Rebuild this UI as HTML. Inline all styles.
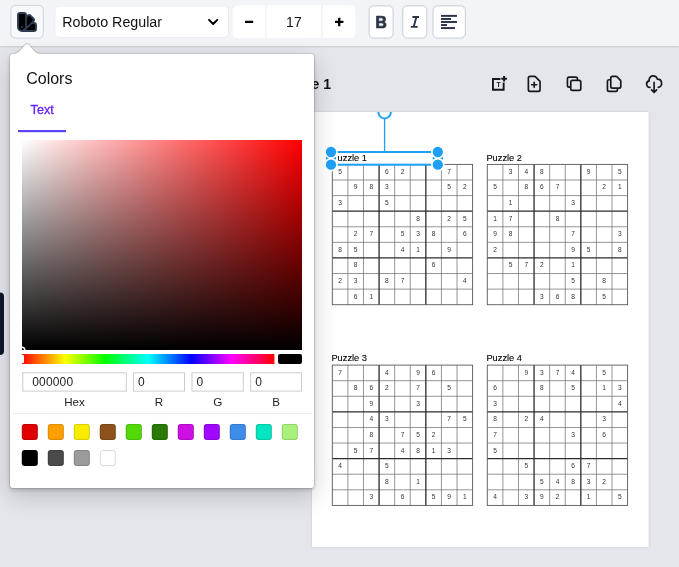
<!DOCTYPE html>
<html lang="en">
<head>
<meta charset="utf-8">
<title>Sudoku editor</title>
<style>
html,body{margin:0;padding:0}
body{width:679px;height:567px;overflow:hidden;position:relative;background:#e5e6eb;font-family:"Liberation Sans",sans-serif;color:#000}
#root{position:absolute;left:0;top:0;width:679px;height:567px;overflow:hidden;will-change:transform}
#root>svg,#root>div{position:absolute}
svg.full{left:0;top:0;width:679px;height:567px}
text{font-family:"Liberation Sans",sans-serif;white-space:pre}
.tb{left:0;top:0;width:679px;height:46px;background:#f3f4f8;box-shadow:0 1px 2px rgba(16,22,26,.14)}
.pop{left:10px;top:54px;width:304px;height:434px;background:#fff;border-radius:3px;box-shadow:0 0 0 1px rgba(16,22,26,.1),0 2px 4px rgba(16,22,26,.2),0 8px 24px rgba(16,22,26,.2)}
.pt{font-size:9.8px;fill:#000;stroke:#000;stroke-width:.1px}
.dg text{font-size:6.6px;fill:#333;text-anchor:middle}
.t14{font-size:14px;fill:#111}
.lab{font-size:11.6px;fill:#222;text-anchor:middle}
.inp{font-size:12px;fill:#222;letter-spacing:.15px}
</style>
</head>
<body>
<div id="root">

<!-- ================= canvas area ================= -->
<svg class="full" viewBox="0 0 679 567">
  <defs>
    <clipPath id="pageclip"><rect x="312" y="112" width="336.5" height="435"/></clipPath>
    <filter id="pgsh" x="-5%" y="-5%" width="110%" height="110%"><feDropShadow dx="0" dy="0" stdDeviation="1.2" flood-color="#000" flood-opacity=".14"/></filter>
  </defs>
  <rect x="312" y="112" width="336.5" height="435" fill="#fff" filter="url(#pgsh)"/>
  <text class="t14" x="285.8" y="89.2" font-weight="bold">Page 1</text>
  <!-- add text -->
  <g fill="none" stroke="#14171f" stroke-width="1.9">
    <path d="M500.4 78.95H492.95V89.75H503.65V82.5"/>
    <path d="M501.3 78.7H506.9M504.1 75.9V81.5" stroke-width="2"/>
    <text x="498.55" y="87.05" font-size="6.9" font-weight="bold" fill="#14171f" stroke="none" text-anchor="middle">T</text>
  </g>
  <g fill="none" stroke="#14171f" stroke-width="2" stroke-linecap="round" stroke-linejoin="round">
    <path transform="translate(524.2 73.9) scale(.8333)" d="M9 13h6m-3-3v6m5 5H7a2 2 0 01-2-2V5a2 2 0 012-2h5.586a1 1 0 01.707.293l5.414 5.414a1 1 0 01.293.707V19a2 2 0 01-2 2z"/>
    <path transform="translate(564.1 73.75) scale(.8333)" d="M8 16H6a2 2 0 01-2-2V6a2 2 0 012-2h8a2 2 0 012 2v2m-6 12h8a2 2 0 002-2v-8a2 2 0 00-2-2h-8a2 2 0 00-2 2v8a2 2 0 002 2z"/>
    <path transform="translate(604.1 73.9) scale(.8333)" d="M8 7v8a2 2 0 002 2h6M8 7V5a2 2 0 012-2h4.586a1 1 0 01.707.293l4.414 4.414a1 1 0 01.293.707V15a2 2 0 01-2 2h-2M8 7H6a2 2 0 00-2 2v10a2 2 0 002 2h8a2 2 0 002-2v-2"/>
    <path transform="translate(644.1 74.1) scale(.8333)" d="M7 16a4 4 0 01-.88-7.903A5 5 0 1115.9 6L16 6a5 5 0 011 9.9M9 19l3 3m0 0l3-3m-3 3V10"/>
  </g>
  <g clip-path="url(#pageclip)">
<text class="pt" x="331.4" y="161.45" textLength="35.6" lengthAdjust="spacingAndGlyphs">Puzzle 1</text>
<g transform="translate(332.30 164.40)">
<path d="M15.59 0V140.31M0 15.59H140.31M31.18 0V140.31M0 31.18H140.31M62.36 0V140.31M0 62.36H140.31M77.95 0V140.31M0 77.95H140.31M109.13 0V140.31M0 109.13H140.31M124.72 0V140.31M0 124.72H140.31" stroke="#686868" stroke-width="0.7" fill="none"/>
<path d="M46.77 0V140.31M0 46.77H140.31M93.54 0V140.31M0 93.54H140.31" stroke="#2c2c2c" stroke-width="1.3" fill="none"/>
<rect x="0" y="0" width="140.31" height="140.31" stroke="#585858" stroke-width="0.9" fill="none"/>
<g class="dg">
<text x="7.8" y="9.5">5</text>
<text x="54.6" y="9.5">6</text>
<text x="70.2" y="9.5">2</text>
<text x="116.9" y="9.5">7</text>
<text x="23.4" y="25.1">9</text>
<text x="39.0" y="25.1">8</text>
<text x="54.6" y="25.1">3</text>
<text x="116.9" y="25.1">5</text>
<text x="132.5" y="25.1">2</text>
<text x="7.8" y="40.7">3</text>
<text x="54.6" y="40.7">5</text>
<text x="85.7" y="56.3">8</text>
<text x="116.9" y="56.3">2</text>
<text x="132.5" y="56.3">5</text>
<text x="23.4" y="71.9">2</text>
<text x="39.0" y="71.9">7</text>
<text x="70.2" y="71.9">5</text>
<text x="85.7" y="71.9">3</text>
<text x="101.3" y="71.9">8</text>
<text x="132.5" y="71.9">6</text>
<text x="7.8" y="87.5">8</text>
<text x="23.4" y="87.5">5</text>
<text x="70.2" y="87.5">4</text>
<text x="85.7" y="87.5">1</text>
<text x="116.9" y="87.5">9</text>
<text x="23.4" y="103.1">8</text>
<text x="101.3" y="103.1">6</text>
<text x="7.8" y="118.7">2</text>
<text x="23.4" y="118.7">3</text>
<text x="54.6" y="118.7">8</text>
<text x="70.2" y="118.7">7</text>
<text x="132.5" y="118.7">4</text>
<text x="23.4" y="134.3">6</text>
<text x="39.0" y="134.3">1</text>
</g></g>
<text class="pt" x="486.4" y="161.45" textLength="35.6" lengthAdjust="spacingAndGlyphs">Puzzle 2</text>
<g transform="translate(487.30 164.40)">
<path d="M15.59 0V140.31M0 15.59H140.31M31.18 0V140.31M0 31.18H140.31M62.36 0V140.31M0 62.36H140.31M77.95 0V140.31M0 77.95H140.31M109.13 0V140.31M0 109.13H140.31M124.72 0V140.31M0 124.72H140.31" stroke="#686868" stroke-width="0.7" fill="none"/>
<path d="M46.77 0V140.31M0 46.77H140.31M93.54 0V140.31M0 93.54H140.31" stroke="#2c2c2c" stroke-width="1.3" fill="none"/>
<rect x="0" y="0" width="140.31" height="140.31" stroke="#585858" stroke-width="0.9" fill="none"/>
<g class="dg">
<text x="23.4" y="9.5">3</text>
<text x="39.0" y="9.5">4</text>
<text x="54.6" y="9.5">8</text>
<text x="101.3" y="9.5">9</text>
<text x="132.5" y="9.5">5</text>
<text x="7.8" y="25.1">5</text>
<text x="39.0" y="25.1">8</text>
<text x="54.6" y="25.1">6</text>
<text x="70.2" y="25.1">7</text>
<text x="116.9" y="25.1">2</text>
<text x="132.5" y="25.1">1</text>
<text x="23.4" y="40.7">1</text>
<text x="85.7" y="40.7">3</text>
<text x="7.8" y="56.3">1</text>
<text x="23.4" y="56.3">7</text>
<text x="70.2" y="56.3">8</text>
<text x="7.8" y="71.9">9</text>
<text x="23.4" y="71.9">8</text>
<text x="85.7" y="71.9">7</text>
<text x="132.5" y="71.9">3</text>
<text x="7.8" y="87.5">2</text>
<text x="85.7" y="87.5">9</text>
<text x="101.3" y="87.5">5</text>
<text x="132.5" y="87.5">8</text>
<text x="23.4" y="103.1">5</text>
<text x="39.0" y="103.1">7</text>
<text x="54.6" y="103.1">2</text>
<text x="85.7" y="103.1">1</text>
<text x="85.7" y="118.7">5</text>
<text x="116.9" y="118.7">8</text>
<text x="54.6" y="134.3">3</text>
<text x="70.2" y="134.3">6</text>
<text x="85.7" y="134.3">8</text>
<text x="116.9" y="134.3">5</text>
</g></g>
<text class="pt" x="331.4" y="361.45" textLength="35.6" lengthAdjust="spacingAndGlyphs">Puzzle 3</text>
<g transform="translate(332.30 365.10)">
<path d="M15.59 0V140.31M0 15.59H140.31M31.18 0V140.31M0 31.18H140.31M62.36 0V140.31M0 62.36H140.31M77.95 0V140.31M0 77.95H140.31M109.13 0V140.31M0 109.13H140.31M124.72 0V140.31M0 124.72H140.31" stroke="#686868" stroke-width="0.7" fill="none"/>
<path d="M46.77 0V140.31M0 46.77H140.31M93.54 0V140.31M0 93.54H140.31" stroke="#2c2c2c" stroke-width="1.3" fill="none"/>
<rect x="0" y="0" width="140.31" height="140.31" stroke="#585858" stroke-width="0.9" fill="none"/>
<g class="dg">
<text x="7.8" y="9.5">7</text>
<text x="54.6" y="9.5">4</text>
<text x="85.7" y="9.5">9</text>
<text x="101.3" y="9.5">6</text>
<text x="23.4" y="25.1">8</text>
<text x="39.0" y="25.1">6</text>
<text x="54.6" y="25.1">2</text>
<text x="85.7" y="25.1">7</text>
<text x="116.9" y="25.1">5</text>
<text x="39.0" y="40.7">9</text>
<text x="85.7" y="40.7">3</text>
<text x="39.0" y="56.3">4</text>
<text x="54.6" y="56.3">3</text>
<text x="116.9" y="56.3">7</text>
<text x="132.5" y="56.3">5</text>
<text x="39.0" y="71.9">8</text>
<text x="70.2" y="71.9">7</text>
<text x="85.7" y="71.9">5</text>
<text x="101.3" y="71.9">2</text>
<text x="23.4" y="87.5">5</text>
<text x="39.0" y="87.5">7</text>
<text x="70.2" y="87.5">4</text>
<text x="85.7" y="87.5">8</text>
<text x="101.3" y="87.5">1</text>
<text x="116.9" y="87.5">3</text>
<text x="7.8" y="103.1">4</text>
<text x="54.6" y="103.1">5</text>
<text x="54.6" y="118.7">8</text>
<text x="85.7" y="118.7">1</text>
<text x="39.0" y="134.3">3</text>
<text x="70.2" y="134.3">6</text>
<text x="101.3" y="134.3">5</text>
<text x="116.9" y="134.3">9</text>
<text x="132.5" y="134.3">1</text>
</g></g>
<text class="pt" x="486.4" y="361.45" textLength="35.6" lengthAdjust="spacingAndGlyphs">Puzzle 4</text>
<g transform="translate(487.30 365.10)">
<path d="M15.59 0V140.31M0 15.59H140.31M31.18 0V140.31M0 31.18H140.31M62.36 0V140.31M0 62.36H140.31M77.95 0V140.31M0 77.95H140.31M109.13 0V140.31M0 109.13H140.31M124.72 0V140.31M0 124.72H140.31" stroke="#686868" stroke-width="0.7" fill="none"/>
<path d="M46.77 0V140.31M0 46.77H140.31M93.54 0V140.31M0 93.54H140.31" stroke="#2c2c2c" stroke-width="1.3" fill="none"/>
<rect x="0" y="0" width="140.31" height="140.31" stroke="#585858" stroke-width="0.9" fill="none"/>
<g class="dg">
<text x="39.0" y="9.5">9</text>
<text x="54.6" y="9.5">3</text>
<text x="70.2" y="9.5">7</text>
<text x="85.7" y="9.5">4</text>
<text x="116.9" y="9.5">5</text>
<text x="7.8" y="25.1">6</text>
<text x="54.6" y="25.1">8</text>
<text x="85.7" y="25.1">5</text>
<text x="116.9" y="25.1">1</text>
<text x="132.5" y="25.1">3</text>
<text x="7.8" y="40.7">3</text>
<text x="132.5" y="40.7">4</text>
<text x="7.8" y="56.3">8</text>
<text x="39.0" y="56.3">2</text>
<text x="54.6" y="56.3">4</text>
<text x="116.9" y="56.3">3</text>
<text x="7.8" y="71.9">7</text>
<text x="85.7" y="71.9">3</text>
<text x="116.9" y="71.9">6</text>
<text x="7.8" y="87.5">5</text>
<text x="39.0" y="103.1">5</text>
<text x="85.7" y="103.1">6</text>
<text x="101.3" y="103.1">7</text>
<text x="54.6" y="118.7">5</text>
<text x="70.2" y="118.7">4</text>
<text x="85.7" y="118.7">8</text>
<text x="101.3" y="118.7">3</text>
<text x="116.9" y="118.7">2</text>
<text x="7.8" y="134.3">4</text>
<text x="39.0" y="134.3">3</text>
<text x="54.6" y="134.3">9</text>
<text x="70.2" y="134.3">2</text>
<text x="101.3" y="134.3">1</text>
<text x="132.5" y="134.3">5</text>
</g></g>
    <!-- selection / transformer -->
    <path d="M384.6 119V152" stroke="#1fa0f7" stroke-width="1.3" fill="none"/>
    <path d="M331 152H437.8M331 164.7H437.8" stroke="#1fa0f7" stroke-width="2" fill="none"/>
    <circle cx="384.6" cy="112.2" r="6.2" fill="#fff" stroke="#1fa0f7" stroke-width="2"/>
    <g fill="#1fa0f7" stroke="#fff" stroke-width="1.7">
      <circle cx="331" cy="158.3" r="6"/><circle cx="437.8" cy="158.3" r="6"/>
      <circle cx="331" cy="152" r="6"/><circle cx="437.8" cy="152" r="6"/>
      <circle cx="331" cy="164.7" r="6"/><circle cx="437.8" cy="164.7" r="6"/>
    </g>
  </g>
  <!-- side handle -->
  <rect x="-6" y="292.5" width="10" height="62.5" rx="4" fill="#0f172a"/>
</svg>

<!-- ================= toolbar ================= -->
<div class="tb"></div>
<svg class="full" viewBox="0 0 679 567">
  <!-- color button -->
  <rect x="10.95" y="5.4" width="32.3" height="32.7" rx="4.5" fill="#f8f9fb" stroke="#cdd2de"/>
  <path transform="translate(15 10)" fill="#000" stroke="#2d3a52" stroke-width="1.9" stroke-linecap="round" stroke-linejoin="round" d="M7 21a4 4 0 01-4-4V5a2 2 0 012-2h4a2 2 0 012 2v12a4 4 0 01-4 4zm0 0h12a2 2 0 002-2v-4a2 2 0 00-2-2h-2.343M11 7.343l1.657-1.657a2 2 0 012.828 0l2.829 2.829a2 2 0 010 2.828l-8.486 8.485M7 17h.01"/>
  <!-- font select -->
  <rect x="54.4" y="5.5" width="174.6" height="32.6" rx="4.5" fill="#fff"/><rect x="54.9" y="6" width="173.6" height="31.6" rx="4" fill="none" stroke="#e9ebf1"/>
  <text x="62.2" y="26.8" font-size="14.25" fill="#111">Roboto Regular</text>
  <path d="M209.05 19.85L213.15 23.95L217.25 19.85" fill="none" stroke="#000" stroke-width="2" stroke-linecap="round" stroke-linejoin="round"/>
  <!-- size stepper -->
  <path d="M237.2 5.5H265.2V38H237.2a4.5 4.5 0 01-4.5-4.5V10a4.5 4.5 0 014.5-4.5z" fill="#fff"/>
  <rect x="266.7" y="5.5" width="54.3" height="32.5" fill="#fff"/>
  <path d="M322.8 5.5H350.8a4.5 4.5 0 014.5 4.5V33.5a4.5 4.5 0 01-4.5 4.5H322.8z" fill="#fff"/>
  <rect x="245" y="20.7" width="8.2" height="2.3" rx=".5" fill="#000"/>
  <text class="t14" x="293.9" y="26.8" text-anchor="middle">17</text>
  <rect x="335" y="20.8" width="8.4" height="2.3" rx=".5" fill="#000"/>
  <rect x="338.05" y="17.8" width="2.3" height="8.4" rx=".5" fill="#000"/>
  <!-- bold / italic / align -->
  <rect x="369.1" y="5.8" width="24" height="32.3" rx="4.5" fill="#fff" stroke="#c6cbd8"/>
  <rect x="402.8" y="5.8" width="24" height="32.3" rx="4.5" fill="#fff" stroke="#c6cbd8"/>
  <rect x="433" y="5.8" width="32.3" height="32.3" rx="4.5" fill="#fff" stroke="#c6cbd8"/>
  <text x="0" y="0" transform="translate(381.05 27.8) scale(.98 1)" text-anchor="middle" font-size="16" font-weight="bold" fill="#2b3448" stroke="#2b3448" stroke-width=".7" stroke-linejoin="round">B</text>
  <path transform="translate(409 14.25)" fill="none" stroke="#2b3448" stroke-width="1.9" d="M3.4 2.7h6.6M1.9 12.6h6.8M7.4 2.7L4.7 12.6"/>
  <g fill="#2b3448">
    <rect x="441" y="14.9" width="16" height="1.95"/>
    <rect x="441" y="18" width="10" height="1.95"/>
    <rect x="441" y="21" width="16" height="1.95"/>
    <rect x="441" y="24.05" width="6" height="1.95"/>
    <rect x="441" y="27.1" width="14" height="1.95"/>
  </g>
</svg>

<!-- ================= popover ================= -->
<div class="pop"></div>
<svg class="full" viewBox="0 0 679 567">
  <defs>
    <linearGradient id="gw" x1="0" y1="0" x2="1" y2="0"><stop offset="0" stop-color="#fff"/><stop offset="1" stop-color="#fff" stop-opacity="0"/></linearGradient>
    <linearGradient id="gk" x1="0" y1="1" x2="0" y2="0"><stop offset="0" stop-color="#000"/><stop offset="1" stop-color="#000" stop-opacity="0"/></linearGradient>
    <linearGradient id="gh" x1="0" y1="0" x2="1" y2="0"><stop offset="0" stop-color="#f00"/><stop offset=".17" stop-color="#ff0"/><stop offset=".33" stop-color="#0f0"/><stop offset=".5" stop-color="#0ff"/><stop offset=".67" stop-color="#00f"/><stop offset=".83" stop-color="#f0f"/><stop offset="1" stop-color="#f00"/></linearGradient>
    <clipPath id="satclip"><rect x="22" y="140" width="280" height="210"/></clipPath>
    <clipPath id="hueclip"><rect x="22" y="354" width="252.4" height="10"/></clipPath>
  </defs>
  <!-- arrow (points up to the colour button) -->
  <g transform="translate(27 58) rotate(90) translate(-15 -15)">
    <path fill="rgba(16,22,26,.18)" d="M8.11 6.302c1.015-.936 1.887-2.922 1.887-4.297v26c0-1.378-.868-3.357-1.888-4.297L.925 17.09c-1.237-1.14-1.233-3.034 0-4.17L8.11 6.302z"/>
    <path fill="#fff" d="M8.787 7.036c1.22-1.125 2.21-3.376 2.21-5.03V0v30-2.005c0-1.654-.983-3.9-2.21-5.03l-7.183-6.616c-.81-.746-.802-1.96 0-2.7l7.183-6.614z"/>
  </g>
  <text x="26.2" y="83.6" font-size="16" fill="#111">Colors</text>
  <text x="30.6" y="113.6" font-size="12.6" fill="#641ff5" stroke="#641ff5" stroke-width=".3">Text</text>
  <rect x="18" y="130" width="48" height="2.2" fill="#5c45f8"/>
  <!-- saturation -->
  <rect x="22" y="140" width="280" height="210" fill="#f00"/>
  <rect x="22" y="140" width="280" height="210" fill="url(#gw)"/>
  <rect x="22" y="140" width="280" height="210" fill="url(#gk)"/>
  <g clip-path="url(#satclip)">
    <circle cx="22" cy="350" r="4.2" fill="none" stroke="rgba(0,0,0,.4)" stroke-width="1.4"/>
    <circle cx="22" cy="350" r="2.75" fill="none" stroke="#fff" stroke-width="1.5"/>
  </g>
  <!-- hue -->
  <rect x="22" y="354" width="252.4" height="10" fill="url(#gh)"/>
  <g clip-path="url(#hueclip)"><rect x="20" y="355" width="4" height="8" rx="1" fill="#fff"/></g>
  <rect x="278" y="354" width="24" height="10" rx="2" fill="#000"/>
  <!-- inputs -->
  <g fill="#fff" stroke="#ccc">
    <rect x="22.8" y="372.8" width="103.5" height="18.3"/>
    <rect x="133.5" y="372.8" width="51" height="18.3"/>
    <rect x="192" y="372.8" width="51.3" height="18.3"/>
    <rect x="250.7" y="372.8" width="50.8" height="18.3"/>
  </g>
  <text class="inp" x="32.3" y="386.2">000000</text>
  <text class="inp" x="138" y="386.2">0</text>
  <text class="inp" x="196.5" y="386.2">0</text>
  <text class="inp" x="255.2" y="386.2">0</text>
  <text class="lab" x="74.5" y="406">Hex</text>
  <text class="lab" x="159" y="406">R</text>
  <text class="lab" x="217.7" y="406">G</text>
  <text class="lab" x="276.1" y="406">B</text>
  <rect x="12" y="413.1" width="300" height="1" fill="#eee"/>
<rect x="21.8" y="423.9" width="16" height="16" rx="3" fill="#e00000"/><rect x="22.3" y="424.4" width="15" height="15" rx="2.5" fill="none" stroke="rgba(0,0,0,.15)"/>
<rect x="47.8" y="423.9" width="16" height="16" rx="3" fill="#ffa000"/><rect x="48.3" y="424.4" width="15" height="15" rx="2.5" fill="none" stroke="rgba(0,0,0,.15)"/>
<rect x="73.8" y="423.9" width="16" height="16" rx="3" fill="#f8ec00"/><rect x="74.3" y="424.4" width="15" height="15" rx="2.5" fill="none" stroke="rgba(0,0,0,.15)"/>
<rect x="99.8" y="423.9" width="16" height="16" rx="3" fill="#8c541c"/><rect x="100.3" y="424.4" width="15" height="15" rx="2.5" fill="none" stroke="rgba(0,0,0,.15)"/>
<rect x="125.8" y="423.9" width="16" height="16" rx="3" fill="#54d806"/><rect x="126.3" y="424.4" width="15" height="15" rx="2.5" fill="none" stroke="rgba(0,0,0,.15)"/>
<rect x="151.8" y="423.9" width="16" height="16" rx="3" fill="#2a7a08"/><rect x="152.3" y="424.4" width="15" height="15" rx="2.5" fill="none" stroke="rgba(0,0,0,.15)"/>
<rect x="177.8" y="423.9" width="16" height="16" rx="3" fill="#cc10e4"/><rect x="178.3" y="424.4" width="15" height="15" rx="2.5" fill="none" stroke="rgba(0,0,0,.15)"/>
<rect x="203.8" y="423.9" width="16" height="16" rx="3" fill="#a008ff"/><rect x="204.3" y="424.4" width="15" height="15" rx="2.5" fill="none" stroke="rgba(0,0,0,.15)"/>
<rect x="229.8" y="423.9" width="16" height="16" rx="3" fill="#3c8ce8"/><rect x="230.3" y="424.4" width="15" height="15" rx="2.5" fill="none" stroke="rgba(0,0,0,.15)"/>
<rect x="255.8" y="423.9" width="16" height="16" rx="3" fill="#04e6c2"/><rect x="256.3" y="424.4" width="15" height="15" rx="2.5" fill="none" stroke="rgba(0,0,0,.15)"/>
<rect x="281.8" y="423.9" width="16" height="16" rx="3" fill="#aaf07c"/><rect x="282.3" y="424.4" width="15" height="15" rx="2.5" fill="none" stroke="rgba(0,0,0,.15)"/>
<rect x="21.8" y="450.0" width="16" height="16" rx="3" fill="#000000"/><rect x="22.3" y="450.5" width="15" height="15" rx="2.5" fill="none" stroke="rgba(0,0,0,.15)"/>
<rect x="47.8" y="450.0" width="16" height="16" rx="3" fill="#4a4a4a"/><rect x="48.3" y="450.5" width="15" height="15" rx="2.5" fill="none" stroke="rgba(0,0,0,.15)"/>
<rect x="73.8" y="450.0" width="16" height="16" rx="3" fill="#9b9b9b"/><rect x="74.3" y="450.5" width="15" height="15" rx="2.5" fill="none" stroke="rgba(0,0,0,.15)"/>
<rect x="99.8" y="450.0" width="16" height="16" rx="3" fill="#ffffff"/><rect x="100.3" y="450.5" width="15" height="15" rx="2.5" fill="none" stroke="rgba(0,0,0,.15)"/>
</svg>

</div>
</body>
</html>
